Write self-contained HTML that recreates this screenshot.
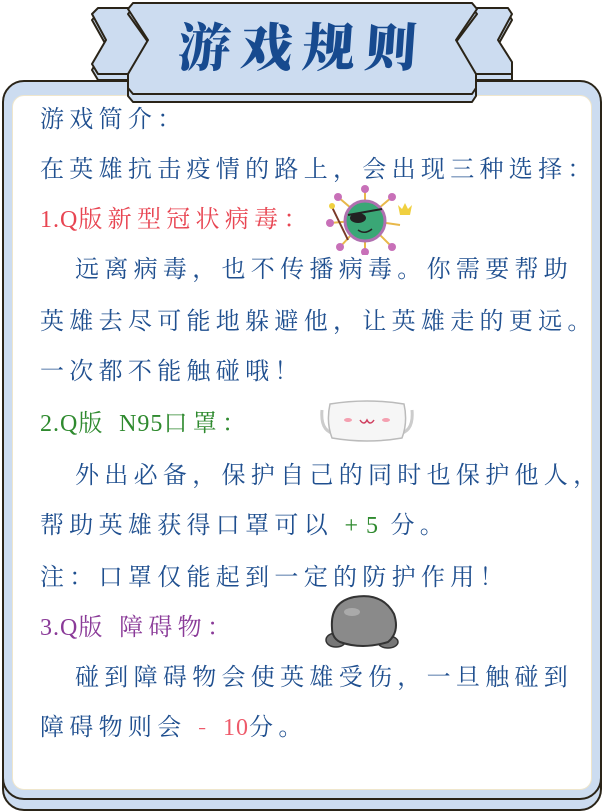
<!DOCTYPE html>
<html><head><meta charset="utf-8"><style>
body{margin:0;width:604px;height:812px;background:#fff;position:relative;overflow:hidden;font-family:"Noto Serif CJK SC","Liberation Serif",serif;}
.ab{position:absolute}
.l{position:absolute;left:40px;font-size:24px;letter-spacing:5.3px;color:#1f4f8f;white-space:nowrap;line-height:30px}
.r{color:#e84552}.g{color:#2f8a2f}.p{color:#8a3a98}.pk{color:#ee5a6a}
.n{letter-spacing:1px;font-family:"Liberation Serif",serif;font-size:24px}
</style></head><body>
<div class="ab" style="left:2px;top:90px;width:596px;height:717px;border:2px solid #2a2418;border-radius:22px;background:#ccdcf0"></div>
<div class="ab" style="left:2px;top:80px;width:596px;height:716px;border:2px solid #2a2418;border-radius:22px;background:#ccdcf0"></div>
<div class="ab" style="left:12px;top:95px;width:578px;height:693px;border-radius:12px;background:#fff;border:1px solid #efe6cc"></div>
<svg class="ab" style="left:0;top:0" width="604" height="110">
<g stroke="#2a2418" stroke-width="2" fill="#ccdcf0" stroke-linejoin="round">
<path d="M98,13 L508,13 L512,20 L498,45 L512,68 L512,80 L98,80 L92,70 L106,45 L92,20Z"/>
<path d="M98,8 L508,8 L512,14 L498,40 L512,62 L512,74 L98,74 L92,64 L106,40 L92,14Z"/>
<path d="M133,8 L472,8 L477,14 L456,42 L476,78 L476,96 L472,102 L133,102 L128,96 L128,78 L148,42 L128,14Z"/>
<path d="M133,3 L472,3 L477,9 L456,40 L476,74 L476,88 L472,94 L133,94 L128,88 L128,74 L148,40 L128,9Z"/>
</g>
<text x="302" y="66" text-anchor="middle" font-family="'Noto Serif CJK SC',serif" font-weight="900" font-size="52" fill="#174a8f" letter-spacing="10" transform="skewX(-4) translate(4,0)">游戏规则</text>
</svg>
<div class="l" style="top:102px">游戏简介：</div>
<div class="l" style="top:152px">在英雄抗击疫情的路上，会出现三种选择：</div>
<div class="l r" style="top:202px"><span class="n">1.Q</span>版新型冠状病毒：</div>
<div class="l" style="top:252px;left:75px">远离病毒，也不传播病毒。你需要帮助</div>
<div class="l" style="top:304px">英雄去尽可能地躲避他，让英雄走的更远。</div>
<div class="l" style="top:354px">一次都不能触碰哦！</div>
<div class="l g" style="top:406px"><span class="n">2.Q</span>版 <span class="n">N95</span>口罩：</div>
<div class="l" style="top:458px;left:75px">外出必备，保护自己的同时也保护他人，</div>
<div class="l" style="top:508px">帮助英雄获得口罩可以 <span class="g n">+ 5</span> 分。</div>
<div class="l" style="top:560px">注：口罩仅能起到一定的防护作用！</div>
<div class="l p" style="top:610px"><span class="n">3.Q</span>版 障碍物：</div>
<div class="l" style="top:660px;left:75px">碰到障碍物会使英雄受伤，一旦触碰到</div>
<div class="l" style="top:710px">障碍物则会 <span class="pk">- <span class="n">10</span></span>分。</div>
<svg class="ab" style="left:320px;top:185px" width="100" height="70">
<g stroke="#e8b84a" stroke-width="2">
<line x1="45" y1="35" x2="45" y2="4"/><line x1="45" y1="35" x2="18" y2="12"/><line x1="45" y1="35" x2="72" y2="12"/><line x1="45" y1="35" x2="10" y2="38"/><line x1="45" y1="35" x2="80" y2="40"/><line x1="45" y1="35" x2="20" y2="62"/><line x1="45" y1="35" x2="45" y2="68"/><line x1="45" y1="35" x2="72" y2="62"/></g>
<g fill="#c870b8"><circle cx="45" cy="4" r="4"/><circle cx="18" cy="12" r="4"/><circle cx="72" cy="12" r="4"/><circle cx="10" cy="38" r="4"/><circle cx="20" cy="62" r="4"/><circle cx="45" cy="67" r="4"/><circle cx="72" cy="62" r="4"/></g>
<circle cx="45" cy="36" r="20" fill="#3aa776" stroke="#b070b0" stroke-width="3"/>
<ellipse cx="38" cy="33" rx="8" ry="5" fill="#222"/><line x1="28" y1="30" x2="62" y2="24" stroke="#222" stroke-width="2"/>
<path d="M38,45 Q45,50 52,44" stroke="#222" fill="none" stroke-width="1.5"/>
<line x1="28" y1="55" x2="12" y2="22" stroke="#7a3a2a" stroke-width="2"/><circle cx="12" cy="21" r="3" fill="#f0d040"/>
<path d="M80,30 L78,20 L82,24 L85,18 L88,24 L92,20 L90,30Z" fill="#f0d040"/>
</svg>
<svg class="ab" style="left:316px;top:398px" width="102" height="46">
<path d="M6,12 Q4,34 20,36 M96,12 Q98,34 82,36" stroke="#ccc" stroke-width="3" fill="none"/>
<path d="M14,6 Q51,0 88,6 Q92,24 86,40 Q51,46 16,40 Q10,24 14,6Z" fill="#f6f6f6" stroke="#bbb" stroke-width="1.5"/>
<ellipse cx="32" cy="22" rx="4" ry="2" fill="#f4a0b0"/><ellipse cx="70" cy="22" rx="4" ry="2" fill="#f4a0b0"/>
<path d="M44,22 Q48,28 51,22 Q54,28 58,22" stroke="#d04060" fill="none" stroke-width="1.5"/>
</svg>
<svg class="ab" style="left:322px;top:592px" width="82" height="62">
<ellipse cx="14" cy="48" rx="10" ry="7" fill="#777" stroke="#333" stroke-width="1.5"/>
<ellipse cx="66" cy="50" rx="10" ry="6" fill="#777" stroke="#333" stroke-width="1.5"/>
<path d="M10,36 Q8,10 32,5 Q60,0 72,22 Q78,40 66,50 Q40,58 18,50 Q10,46 10,36Z" fill="#8a8a8a" stroke="#333" stroke-width="2"/>
<ellipse cx="30" cy="20" rx="8" ry="4" fill="#aaa"/>
</svg>
</body></html>
